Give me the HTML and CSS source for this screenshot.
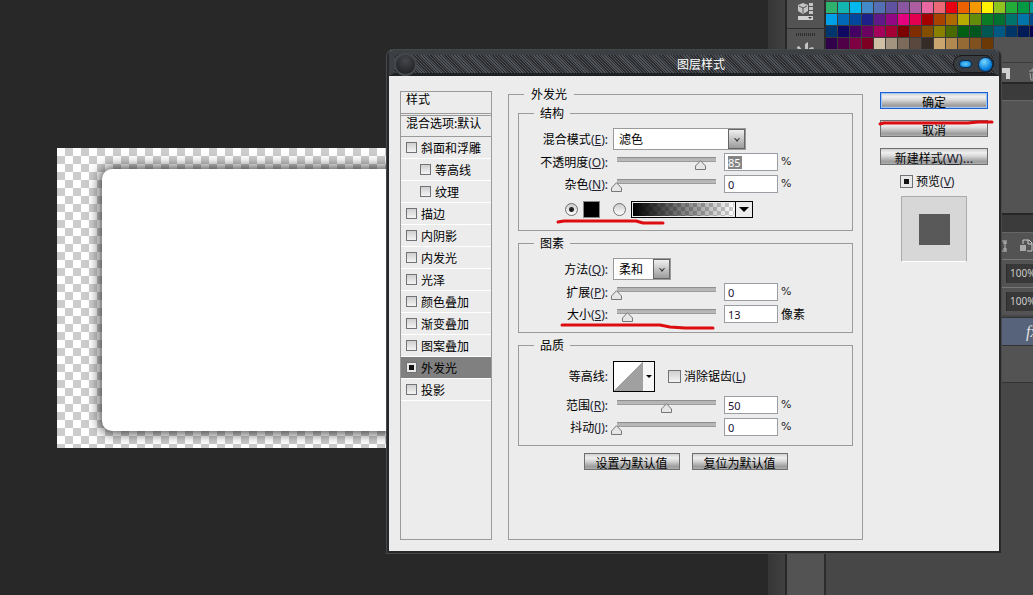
FILE: index.html
```
<!DOCTYPE html>
<html lang="zh-CN">
<head>
<meta charset="utf-8">
<title>图层样式</title>
<link rel="stylesheet" href="styles.css">
</head>
<body>
<div class="app">
  <main class="workspace">
    <div class="document"><div class="shape"></div></div>
  </main>
  <div class="scroll-strip"></div>
  <aside class="icon-rail">
    <div class="rail-cell">
      <svg class="rail-icon" viewBox="0 0 18 18" width="18" height="18">
        <path d="M6 1l5 2v6l-5 3-5-3V3z" fill="#c4c4c4"/><path d="M2 4l4 2 4-2M6 6v5" stroke="#555" fill="none"/>
        <path d="M12 1h4v3h-4zM12 5h4v3h-4zM12 9h4v3h-4z" fill="#c4c4c4"/>
        <path d="M1 14h15v4H1z" fill="#d0d0d0"/><path d="M11 15h4l-2 2z" fill="#333"/>
      </svg>
    </div>
    <div class="rail-cell rail-next">
      <span class="grip"></span>
      <svg class="rail-icon" viewBox="0 0 18 16" width="18" height="16">
        <path d="M8 16V3l3-2v15zM6 10L2 5 0 6l1 4 4 3zM12 7l4-1 2 5-5 1z" fill="#c4c4c4"/>
      </svg>
    </div>
  </aside>
  <aside class="panels">
    <div class="swatches" id="swatches"></div>
    <div class="panel-footer">
      <svg viewBox="0 0 34 14" width="34" height="14">
        <path d="M0 1h9v11H5V6H0z" fill="#d0d0d0"/>
        <path d="M28 4h11M31 4V2h5v2M29 6l1 7h7l1-7M32 6v6" stroke="#aaa" fill="none"/>
      </svg>
    </div>
    <div class="panel-tabs"></div>
    <div class="panel-blank"></div>
    <div class="panel-tabs panel-tabs-layers"></div>
    <div class="layer-tools">
      <svg viewBox="0 0 31 16" width="31" height="16">
        <path d="M0 3h5M0 13h5M3 3v10M1 5h4M1 11h4" stroke="#bbb" fill="none"/>
        <path d="M21 2h6l3 3v8h-5M21 2v4M26 2v4h4" stroke="#ccc" fill="none"/><path d="M18 7h6v6h-6z" fill="#aaa"/>
      </svg>
    </div>
    <div class="opacity-row"><span class="opacity-value">100%</span></div>
    <div class="opacity-row"><span class="opacity-value">100%</span></div>
    <div class="layer-selected"><i>fx</i></div>
    <div class="layer-next"></div>
  </aside>

  <form class="dialog">
    <header class="titlebar">
      <span class="orb"></span>
      <h1 class="title">图层样式</h1>
      <span class="window-buttons">
        <button type="button" class="win-min" aria-label="最小化"></button>
        <button type="button" class="win-close" aria-label="关闭"></button>
      </span>
    </header>
    <div class="dialog-body">
      <section class="styles">
        <div class="styles-head">样式</div>
        <div class="styles-blend">混合选项:默认</div>
        <label class="style-item"><input type="checkbox" class="check">斜面和浮雕</label>
        <label class="style-item style-sub"><input type="checkbox" class="check">等高线</label>
        <label class="style-item style-sub"><input type="checkbox" class="check">纹理</label>
        <label class="style-item"><input type="checkbox" class="check">描边</label>
        <label class="style-item"><input type="checkbox" class="check">内阴影</label>
        <label class="style-item"><input type="checkbox" class="check">内发光</label>
        <label class="style-item"><input type="checkbox" class="check">光泽</label>
        <label class="style-item"><input type="checkbox" class="check">颜色叠加</label>
        <label class="style-item"><input type="checkbox" class="check">渐变叠加</label>
        <label class="style-item"><input type="checkbox" class="check">图案叠加</label>
        <label class="style-item style-active"><input type="checkbox" class="check" checked>外发光</label>
        <label class="style-item"><input type="checkbox" class="check">投影</label>
      </section>

      <fieldset class="group settings">
        <legend>外发光</legend>
        <fieldset class="group">
          <legend>结构</legend>
          <div class="row">
            <label class="name" for="blend">混合模式<span class="key">(<u>E</u>):</span></label>
            <div class="wide"><select id="blend" class="select select-long"><option>滤色</option></select></div>
          </div>
          <div class="row">
            <label class="name" for="opacity">不透明度<span class="key">(<u>O</u>):</span></label>
            <input type="range" class="slider" value="85" aria-label="不透明度">
            <span class="number-selected"><input type="text" id="opacity" class="field" value="85"></span>
            <span class="unit">%</span>
          </div>
          <div class="row">
            <label class="name" for="noise">杂色<span class="key">(<u>N</u>):</span></label>
            <input type="range" class="slider" value="0" aria-label="杂色">
            <input type="text" id="noise" class="field" value="0">
            <span class="unit">%</span>
          </div>
          <div class="row row-color">
            <div class="fill-choice">
              <input type="radio" name="fill" class="radio" aria-label="纯色" checked>
              <button type="button" class="color-well" aria-label="发光颜色"></button>
              <input type="radio" name="fill" class="radio" aria-label="渐变">
              <button type="button" class="gradient-picker" aria-label="渐变"><span class="gradient-view"></span><span class="arrow"></span></button>
            </div>
          </div>
        </fieldset>
        <fieldset class="group">
          <legend>图素</legend>
          <div class="row">
            <label class="name" for="technique">方法<span class="key">(<u>Q</u>):</span></label>
            <div class="wide"><select id="technique" class="select select-short"><option>柔和</option></select></div>
          </div>
          <div class="row">
            <label class="name" for="spread">扩展<span class="key">(<u>P</u>):</span></label>
            <input type="range" class="slider" value="0" aria-label="扩展">
            <input type="text" id="spread" class="field" value="0">
            <span class="unit">%</span>
          </div>
          <div class="row">
            <label class="name" for="size">大小<span class="key">(<u>S</u>):</span></label>
            <input type="range" class="slider" value="11" aria-label="大小">
            <input type="text" id="size" class="field" value="13">
            <span class="unit unit-text">像素</span>
          </div>
        </fieldset>
        <fieldset class="group">
          <legend>品质</legend>
          <div class="row row-contour">
            <span class="name">等高线<span class="key">:</span></span>
            <div class="wide">
              <button type="button" class="contour" aria-label="等高线"><span class="contour-view"></span><span class="arrow arrow-small"></span></button>
              <label class="check-label"><input type="checkbox" class="check check-large"><span>消除锯齿<span class="key">(<u>L</u>)</span></span></label>
            </div>
          </div>
          <div class="row">
            <label class="name" for="range">范围<span class="key">(<u>R</u>):</span></label>
            <input type="range" class="slider" value="50" aria-label="范围">
            <input type="text" id="range" class="field" value="50">
            <span class="unit">%</span>
          </div>
          <div class="row">
            <label class="name" for="jitter">抖动<span class="key">(<u>J</u>):</span></label>
            <input type="range" class="slider" value="0" aria-label="抖动">
            <input type="text" id="jitter" class="field" value="0">
            <span class="unit">%</span>
          </div>
        </fieldset>
        <div class="defaults">
          <button type="button" class="button">设置为默认值</button>
          <button type="button" class="button">复位为默认值</button>
        </div>
      </fieldset>

      <section class="actions">
        <button type="button" class="button button-default">确定</button>
        <button type="button" class="button">取消</button>
        <button type="button" class="button">新建样式<span class="key key-wide">(<u>W</u>)...</span></button>
        <label class="check-label preview-label"><input type="checkbox" class="check check-large" checked><span>预览<span class="key">(<u>V</u>)</span></span></label>
        <div class="preview"><div class="preview-square"></div></div>
      </section>
    </div>
    <svg class="marks" viewBox="0 0 614 502" width="614" height="502">
      <g fill="none" stroke="#dd0c10" stroke-width="3" stroke-linecap="round" stroke-linejoin="round">
        <path d="M171 172l6-1h72l7 2h20"/>
        <path d="M175 275h98l10 2 15 1h28"/>
        <path d="M493 74l4-1h84l10-1h14"/>
      </g>
    </svg>
  </form>
</div>
<script src="swatches.js"></script>
</body>
</html>
```

FILE: swatches.js
```
const rows = [
  ["#2fb26c", "#13b5b1", "#00b7ee", "#448aca", "#556fb5", "#5f52a0", "#8957a1", "#ae5da1", "#ea68a2", "#eb6877", "#e60012", "#eb6100", "#f39800", "#fff100", "#8fc31f", "#22ac38", "#009944", "#009e96"],
  ["#00a0e9", "#0068b7", "#00479d", "#1d2088", "#601986", "#920783", "#e4007f", "#e5004f", "#a40000", "#a84200", "#ac6a00", "#b7aa00", "#638c0b", "#097c25", "#007130", "#00736d", "#0075a9", "#004c8a"],
  ["#00366d", "#100964", "#440062", "#6a005f", "#a4005b", "#a40035", "#7d0000", "#7f2d00", "#834e00", "#8a8000", "#486a00", "#005e15", "#00561f", "#005752", "#005982", "#003567", "#001c58", "#0a0450"],
  ["#31004a", "#500047", "#7e0043", "#7d0022", "#cfbfa4", "#a39480", "#7c6b5a", "#5a483e", "#362c27", "#caa56d", "#b08850", "#956a34", "#80501f", "#6a3906"]
];
const grid = document.getElementById("swatches");
for (const row of rows) {
  const line = document.createElement("div");
  line.className = "swatch-row";
  for (const color of row) {
    const cell = document.createElement("span");
    cell.className = "swatch";
    cell.style.backgroundColor = color;
    line.append(cell);
  }
  grid.append(line);
}
```

FILE: styles.css
```
* { box-sizing: border-box; }

body {
  margin: 0;
  background: #282828;
  color: #000;
  font: 12px/14px "Noto Sans CJK SC", sans-serif;
}

button, input, select { font: inherit; color: inherit; margin: 0; padding: 0; }

.app {
  position: relative;
  display: flex;
  min-height: 100vh;
  overflow: hidden;
}

/* Document window */
.workspace { flex: 1; padding: 148px 0 0 57px; }

.document {
  height: 300px;
  max-width: 480px;
  padding: 21px 0 17px 45px;
  overflow: hidden;
  background: repeating-conic-gradient(#ccc 0 25%, #fff 0 50%) 0 0 / 16px 16px;
}

.shape {
  height: 100%;
  border-radius: 10px;
  background: #fff;
  box-shadow: 0 0 13px 1px rgba(0, 0, 0, 0.85);
}

.scroll-strip {
  width: 19px;
  border-right: 2px solid #282828;
  background: linear-gradient(90deg, #363636, #404040);
}

/* Collapsed panel icons */
.icon-rail { width: 39px; background: #535353; border-right: 2px solid #2c2c2c; }
.rail-cell { display: flex; flex-direction: column; align-items: center; height: 29px; padding-top: 2px; border-bottom: 1px solid #2e2e2e; }
.rail-next { height: auto; padding-top: 4px; gap: 5px; border-bottom: 0; }
.rail-icon { display: block; }
.grip { width: 20px; height: 3px; background: repeating-linear-gradient(90deg, #2e2e2e 0 1px, transparent 1px 2px); }

/* Right panels */
.panels { width: 207px; background: #474747; overflow: hidden; }
.swatches { display: flex; flex-direction: column; height: 62px; padding-top: 1px; background: #535353; }
.swatch-row { display: flex; height: 12px; }
.swatch { flex: none; width: 12px; border: solid #3b3b3b; border-width: 1px 1px 0 0; }
.panel-footer { height: 20px; padding: 4px 0 0 175px; background: #535353; border-top: 1px solid #3a3a3a; }
.panel-footer svg, .layer-tools svg { display: block; }
.panel-tabs { height: 19px; background: #3b3b3b; border-top: 2px solid #262626; border-bottom: 1px solid #666; }
.panel-blank { height: 112px; background: #535353; }
.panel-tabs-layers { height: 20px; }
.layer-tools { height: 26px; padding: 5px 0 0 176px; background: #535353; }
.opacity-row { display: flex; height: 28px; padding: 4px 0 4px 180px; background: #535353; border-top: 1px solid #777; }
.opacity-value { flex: 1; padding: 2px 0 0 3px; background: #383838; border-left: 1px solid #2c2c2c; color: #ccc; font: 10px/14px "Noto Sans", sans-serif; }
.layer-selected { height: 28px; margin-top: 2px; padding: 4px 0 0 200px; background: #56637a; color: #e0e0e0; font: 16px/20px "Liberation Serif", serif; border-top: 1px solid #333; }
.layer-next { height: 38px; background: #535353; border: solid #333; border-width: 1px 0; }

/* Dialog window */
.dialog {
  position: absolute;
  left: 387px;
  top: 50px;
  width: 614px;
  border: 2px solid #26282a;
  border-top: 0;
  border-radius: 6px 6px 0 0;
  background: #ececec;
  box-shadow: 0 0 0 1px #45494b;
}

.titlebar {
  display: flex;
  align-items: center;
  height: 26px;
  border-radius: 5px 5px 0 0;
  border: solid #3c3f43;
  border-width: 5px 5px 3px;
  border-bottom-color: #1f2124;
  background: repeating-linear-gradient(45deg, #2a2c2f 0 1px, #505357 1px 2px);
}

.orb {
  width: 23px;
  height: 23px;
  border: 2px solid #44474c;
  border-radius: 50%;
  background: radial-gradient(circle at 50% 30%, #44464b, #191a1d);
}

.title { flex: 1; margin: 0; padding-left: 32px; color: #fff; font-size: 12px; font-weight: 400; line-height: 14px; text-align: center; }
.window-buttons { display: flex; align-items: center; gap: 6px; height: 18px; padding-left: 5px; border: 1px solid #16181a; border-radius: 9px; background: #393c41; }
.win-min { width: 13px; height: 8px; border: 1px solid #062d55; border-radius: 4px; background: radial-gradient(#5fd0ff, #0473cb); }
.win-close { width: 15px; height: 15px; border: 1px solid #0a2c50; border-radius: 50%; background: radial-gradient(circle at 40% 30%, #7ad6ff, #0a84e0 60%, #04529c); }

.dialog-body {
  display: grid;
  grid-template-columns: 92px 1fr 108px;
  column-gap: 16px;
  padding: 11px;
}

/* Style list */
.styles { margin-top: 4px; border: 1px solid #9a9a9a; }
.styles-head { height: 22px; padding: 0 5px; border-bottom: 1px solid #9a9a9a; }
.styles-blend { height: 22px; margin-top: 1px; padding: 0 0 0 5px; border: solid #9a9a9a; border-width: 1px 0; white-space: nowrap; }
.style-item { display: flex; align-items: center; gap: 4px; height: 22px; padding-left: 5px; border-bottom: 1px solid #fff; white-space: nowrap; }
.style-sub { padding-left: 19px; }
.style-active { background: #808080; }

.check {
  appearance: none;
  flex: none;
  width: 11px;
  height: 11px;
  border: 1px solid #707478;
  background: linear-gradient(#cfcfcf, #f4f4f4);
}
.check:checked { background: linear-gradient(#111, #111) center / 5px 5px no-repeat, #e8e8e8; }
.check-large { width: 13px; height: 13px; }
.check-label { display: flex; align-items: center; gap: 3px; }

/* Setting groups */
.group { min-width: 0; margin: 0; padding: 7px 0; border: 1px solid #9a9a9a; }
.group + .group { margin-top: 5px; }
.group legend { margin-left: 15px; padding: 0 6px; height: 14px; }
.settings { margin-right: 1px; padding: 5px 9px 69px; }
.settings > legend { margin-left: 6px; padding: 0 7px; }

.row {
  display: grid;
  grid-template-columns: 89px 110px 54px 1fr;
  column-gap: 3px;
  align-items: center;
  height: 22px;
}
.row:has(.select) { height: 24px; }
.row-color { height: 28px; }
.row-contour { height: 35px; }
.name { text-align: right; white-space: nowrap; }
.key { font-family: "Noto Sans", sans-serif; font-size: 12px; color: #223; }
.key-wide { font-size: 13px; }
.wide { display: flex; align-items: center; gap: 13px; grid-column: 2 / -1; padding-left: 2px; }
.unit { font: 11px/14px "DejaVu Sans", sans-serif; color: #222; }
.unit-text { font: inherit; color: #000; }

.select {
  appearance: none;
  height: 22px;
  padding-left: 5px;
  border: 1px solid #9a9a9a;
  border-radius: 0;
  background:
    url("data:image/svg+xml,%3Csvg xmlns='http://www.w3.org/2000/svg' width='17' height='20'%3E%3Cdefs%3E%3ClinearGradient id='g' x2='0' y2='1'%3E%3Cstop stop-color='%23f2f2f2'/%3E%3Cstop offset='1' stop-color='%23999'/%3E%3C/linearGradient%3E%3C/defs%3E%3Crect x='.5' y='.5' width='16' height='19' fill='url(%23g)' stroke='%23666'/%3E%3Cpath d='M6 9h1l2 2 2-2h1l-3 4z' fill='%23333'/%3E%3C/svg%3E") right center no-repeat,
    #fff;
}
.select-long { width: 133px; }
.select-short { width: 58px; }

.slider {
  appearance: none;
  width: 110px;
  height: 18px;
  background: linear-gradient(#7d7d7d, #b4b4b4 30%, #b9b9b9 70%, #8c8c8c) center 4px / 99px 5px no-repeat;
}
.slider::-webkit-slider-thumb {
  appearance: none;
  width: 11px;
  height: 10px;
  margin-top: 5px;
  background: url("data:image/svg+xml,%3Csvg xmlns='http://www.w3.org/2000/svg' width='11' height='10'%3E%3Cpath d='M5.5.7L10.500 6v3.500H.5V6z' fill='%23e6e6e6' stroke='%23777'/%3E%3C/svg%3E");
}

.field {
  display: block;
  width: 54px;
  height: 18px;
  padding: 0 3px;
  border: 1px solid #9a9ea4;
  background: #fff;
  color: #213;
  font: 11px/14px "Noto Sans", sans-serif;
}
.number-selected .field {
  color: #fff;
  background: linear-gradient(#858585, #858585) 3px center / 14px 13px no-repeat, #fff;
}

.fill-choice { grid-column: 1 / -1; display: flex; align-items: center; padding-left: 46px; }
.radio { appearance: none; width: 13px; height: 13px; border: 1px solid #6c7074; border-radius: 50%; background: linear-gradient(#ccc, #fff); }
.radio:checked { background: radial-gradient(circle, #222 0 2px, transparent 3px), linear-gradient(#ccc, #fff); }
.color-well { width: 17px; height: 17px; margin: 0 13px 0 5px; border: 1px solid #888; background: #000; }
.gradient-picker { display: flex; width: 122px; height: 17px; margin-left: 5px; border: 1px solid #000; background: #ececec; }
.gradient-view {
  flex: 1;
  margin: 1px;
  background: linear-gradient(90deg, #000, transparent), repeating-conic-gradient(#ccc 0 25%, #fff 0 50%) 0 0 / 8px 8px;
}
.arrow { display: flex; align-items: center; justify-content: center; width: 17px; border-left: 1px solid #000; }
.arrow::before { content: ""; border: 5px solid transparent; border-top-color: #000; border-bottom: 0; }
.arrow-small { width: 11px; border-left: 0; }
.arrow-small::before { border-width: 3px; border-bottom: 0; }

.contour { display: flex; width: 42px; height: 31px; border: 1px solid #000; background: #f6f6f6; }
.contour-view { flex: 1; background: linear-gradient(to bottom right, #fff 50%, #a0a0a0 50%); }
.contour .arrow { align-self: stretch; }

/* Buttons */
.button {
  height: 17px;
  border: 1px solid #6b6f72;
  background: linear-gradient(#d0d0d0, #efefef 25%, #dadada 45%, #9a9a9a 85%, #b0b0b0);
  line-height: 17px;
  white-space: nowrap;
}
.button-default { border-color: #1c5fd0; box-shadow: inset 0 0 0 1px #9cc4f4; }
.defaults { display: flex; justify-content: center; gap: 12px; padding-top: 7px; }
.defaults .button { width: 96px; }

.actions { display: flex; flex-direction: column; padding-top: 5px; }
.actions .button + .button { margin-top: 11px; }
.preview-label { margin: 9px 0 7px 20px; }
.preview { display: flex; align-items: center; justify-content: center; width: 66px; height: 66px; margin-left: 21px; background: #d7d7d7; border: 1px solid #aaa; border-bottom-color: #fff; }
.preview-square { width: 31px; height: 31px; background: #595959; }

/* Hand-drawn underlines over the dialog */
.marks { position: absolute; left: -2px; top: 0; pointer-events: none; }
```
